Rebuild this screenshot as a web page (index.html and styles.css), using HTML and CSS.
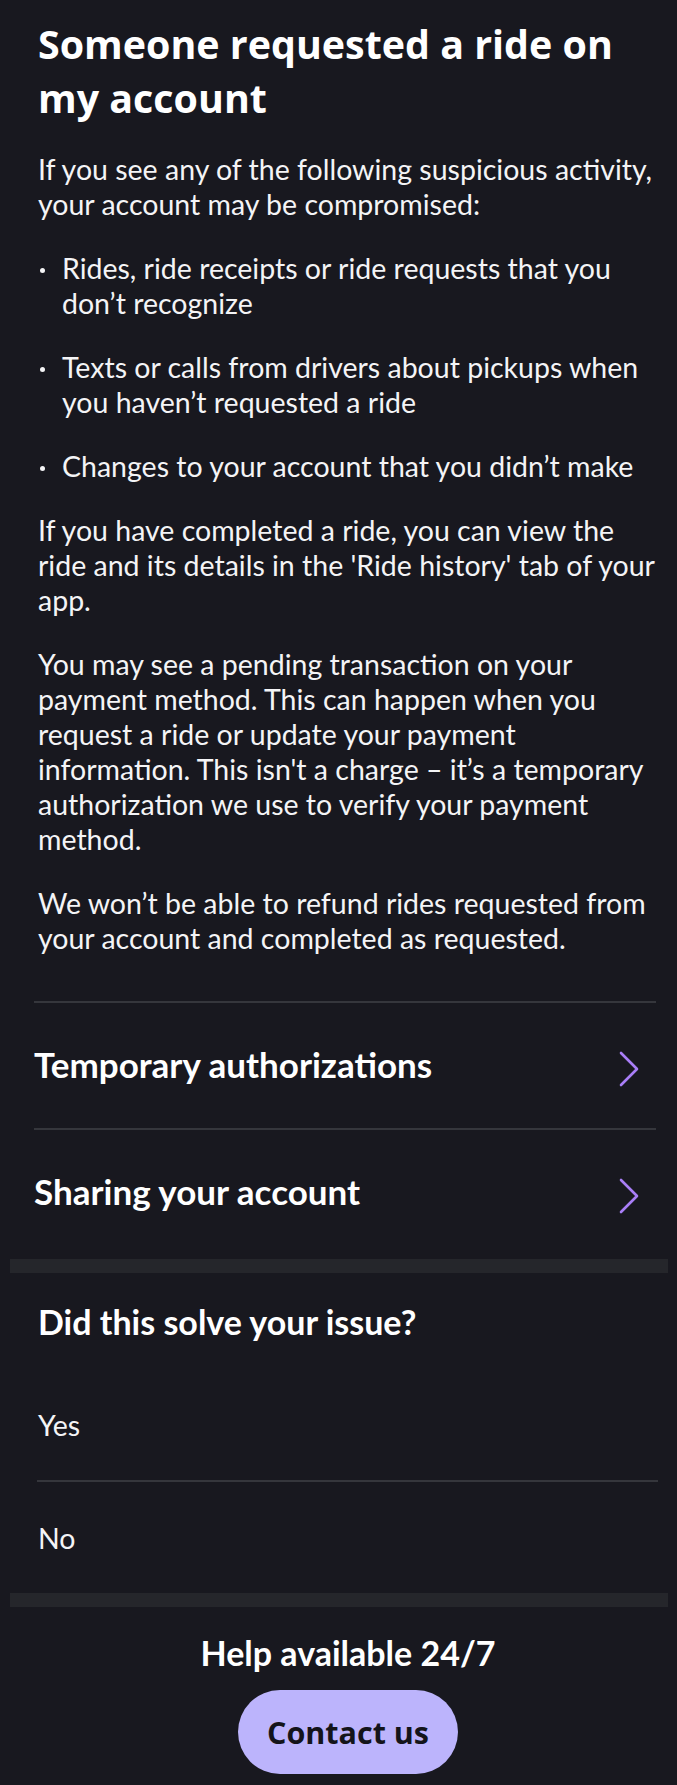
FILE: index.html
```html
<!DOCTYPE html>
<html lang="en">
<head>
<meta charset="utf-8">
<title>Someone requested a ride on my account</title>
<link rel="stylesheet" href="styles.css">
</head>
<body>
<main class="page">
  <article class="article">
    <h1 class="title">Someone requested a ride on my account</h1>
    <p class="para">If you see any of the following suspicious activity, your account may be compromised:</p>
    <ul class="bullets">
      <li class="bullet">Rides, ride receipts or ride requests that you don’t recognize</li>
      <li class="bullet">Texts or calls from drivers about pickups when you haven’t requested a ride</li>
      <li class="bullet">Changes to your account that you didn’t make</li>
    </ul>
    <p class="para">If you have completed a ride, you can view the ride and its details in the 'Ride history' tab of your app.</p>
    <p class="para">You may see a pending transaction on your payment method. This can happen when you request a ride or update your payment information. This isn't a charge – it’s a temporary authorization we use to verify your payment method.</p>
    <p class="para">We won’t be able to refund rides requested from your account and completed as requested.</p>
  </article>

  <nav class="links">
    <a class="link-row" href="#">
      <span class="link-text">Temporary authorizations</span>
      <svg class="chevron" width="20" height="36" viewBox="0 0 20 36" aria-hidden="true"><path d="M2 2 L18 18 L2 34" fill="none" stroke="#a97ef7" stroke-width="2.6" stroke-linecap="round" stroke-linejoin="round"/></svg>
    </a>
    <a class="link-row" href="#">
      <span class="link-text">Sharing your account</span>
      <svg class="chevron" width="20" height="36" viewBox="0 0 20 36" aria-hidden="true"><path d="M2 2 L18 18 L2 34" fill="none" stroke="#a97ef7" stroke-width="2.6" stroke-linecap="round" stroke-linejoin="round"/></svg>
    </a>
  </nav>

  <div class="band"></div>

  <section class="feedback">
    <h2 class="feedback-title">Did this solve your issue?</h2>
    <div class="option">Yes</div>
    <div class="option option-last">No</div>
  </section>

  <div class="band"></div>

  <section class="help">
    <h2 class="help-title">Help available 24/7</h2>
    <a class="contact" href="#">Contact us</a>
  </section>
</main>
</body>
</html>
```

FILE: styles.css
```css
* { box-sizing: border-box; }

html, body {
  margin: 0;
  padding: 0;
  background: #18181f;
}

body {
  font-family: Lato, "Liberation Sans", sans-serif;
  color: #f4f4f6;
}

.page {
  width: 677px;
  padding: 17px 9px 13px 10px;
}

.article {
  padding: 0 10px 0 28px;
}

.title {
  margin: 0;
  font-family: "Open Sans", "Liberation Sans", sans-serif;
  font-size: 39.4px;
  line-height: 54px;
  font-weight: 700;
  color: #ffffff;
}

.para {
  margin: 27px 0 0 0;
  font-size: 28.5px;
  line-height: 35px;
}

.bullets {
  list-style: none;
  margin: 29px 0 0 0;
  padding: 0;
}

.bullet {
  position: relative;
  padding-left: 24px;
  font-size: 28.5px;
  line-height: 35px;
}

.bullet + .bullet {
  margin-top: 29px;
}

.bullet::before {
  content: "";
  position: absolute;
  left: 2px;
  top: 17px;
  width: 5px;
  height: 5px;
  border-radius: 50%;
  background: #f4f4f6;
}

.bullets + .para,
.para + .para {
  margin-top: 29px;
}

.links {
  margin-top: 45px;
  padding: 0 12px 0 24px;
  margin-bottom: 4px;
}

.link-row {
  display: flex;
  align-items: center;
  justify-content: space-between;
  height: 127px;
  border-top: 2px solid #35363c;
  padding: 0 17px 0 0;
  text-decoration: none;
  color: #ffffff;
}

.link-text {
  font-size: 35px;
  font-weight: 700;
  margin-top: -4px;
}

.chevron {
  display: block;
  margin-top: 6px;
}

.band {
  height: 14px;
  background: #25262b;
}

.feedback {
  padding: 0 10px 0 27px;
}

.feedback-title {
  margin: 0;
  height: 96px;
  display: flex;
  align-items: center;
  font-size: 34px;
  font-weight: 700;
  color: #ffffff;
  padding-left: 1px;
}

.option {
  height: 113px;
  display: flex;
  align-items: center;
  padding-left: 1px;
  font-size: 28.5px;
  border-bottom: 2px solid #35363c;
}

.option-last {
  border-bottom: none;
  height: 111px;
}

.help {
  display: flex;
  flex-direction: column;
  align-items: center;
  padding: 26px 10px 0 28px;
}

.help-title {
  margin: 0;
  font-size: 34px;
  line-height: 40px;
  font-weight: 700;
  color: #ffffff;
}

.contact {
  margin-top: 17px;
  width: 220px;
  height: 84px;
  border-radius: 42px;
  background: #bcb4fc;
  color: #14141a;
  display: flex;
  align-items: center;
  justify-content: center;
  font-family: "Open Sans", "Liberation Sans", sans-serif;
  font-size: 30.5px;
  font-weight: 700;
  text-decoration: none;
}
```
